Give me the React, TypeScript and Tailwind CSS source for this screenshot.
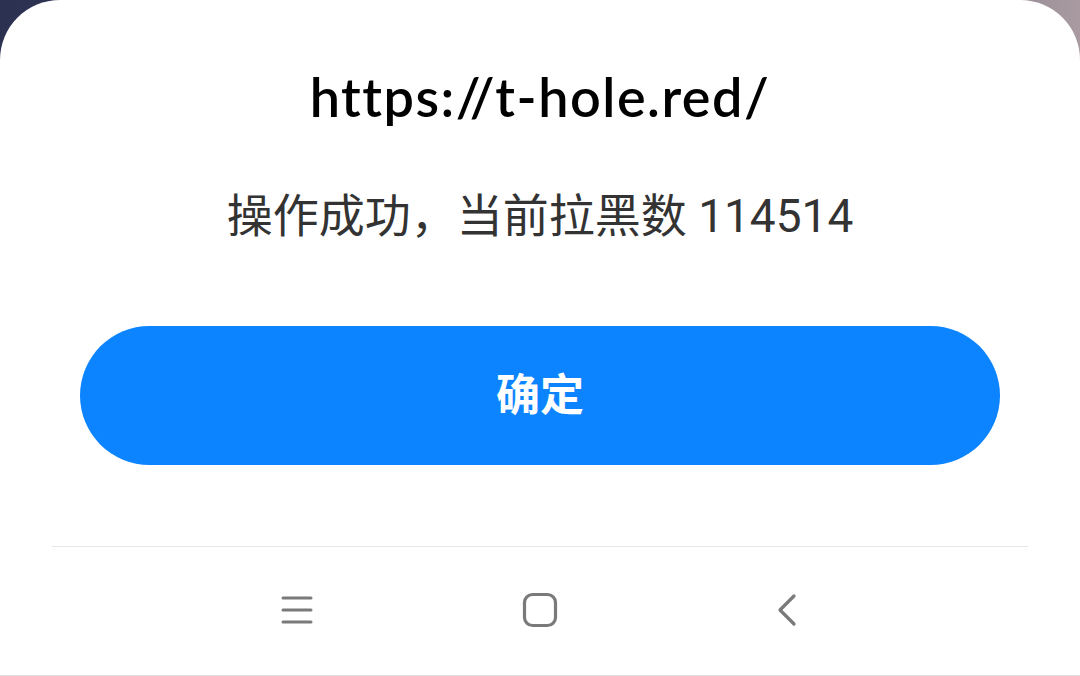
import React from "react";

export default function App() {
  return (
    <div className="w-[1080px] h-[676px] overflow-hidden bg-[linear-gradient(90deg,#2c3152_0%,#3a3d58_50%,#a89aa0_100%)]">
      <div className="h-full w-full bg-white rounded-t-[60px] flex flex-col items-center border-b border-[#e0e0e0]">
        <div className="mt-[68px] h-[58px] flex items-center text-[54px] font-semibold tracking-[1.5px] text-black leading-none [font-family:Lato,'Noto_Sans',sans-serif]">
          https://t-hole.red/
        </div>
        <div className="mt-[62px] h-[56px] flex items-center text-[46px] text-[#333333] leading-none [font-family:Roboto,'Noto_Sans_CJK_SC',sans-serif]">
          操作成功，当前拉黑数 114514
        </div>
        <button className="mt-[82px] w-[920px] h-[139px] rounded-full bg-[#0d84ff] text-white text-[44px] font-bold leading-none [font-family:Roboto,'Noto_Sans_CJK_SC',sans-serif]">
          确定
        </button>
        <div className="mt-[81px] w-[976px] h-px bg-[#e6e6e6]" />
        <div className="flex-1 w-full flex items-center pl-[267px] pb-[2px]">
          <div className="w-[60px] flex justify-center">
            <svg width="34" height="30" viewBox="0 0 34 30" fill="none" stroke="#7a7a7a" strokeWidth="3" strokeLinecap="round">
              <line x1="3" y1="3" x2="31" y2="3" />
              <line x1="3" y1="15" x2="31" y2="15" />
              <line x1="3" y1="27" x2="31" y2="27" />
            </svg>
          </div>
          <div className="w-[60px] ml-[183px] flex justify-center">
            <svg width="36" height="36" viewBox="0 0 36 36" fill="none" stroke="#7a7a7a" strokeWidth="3.2">
              <rect x="2.5" y="2.5" width="31" height="31" rx="8" />
            </svg>
          </div>
          <div className="w-[60px] ml-[187px] flex justify-center">
            <svg width="24" height="34" viewBox="0 0 24 34" fill="none" stroke="#7a7a7a" strokeWidth="3.2" strokeLinecap="round" strokeLinejoin="round">
              <polyline points="19,3 5,17 19,31" />
            </svg>
          </div>
        </div>
      </div>
    </div>
  );
}
